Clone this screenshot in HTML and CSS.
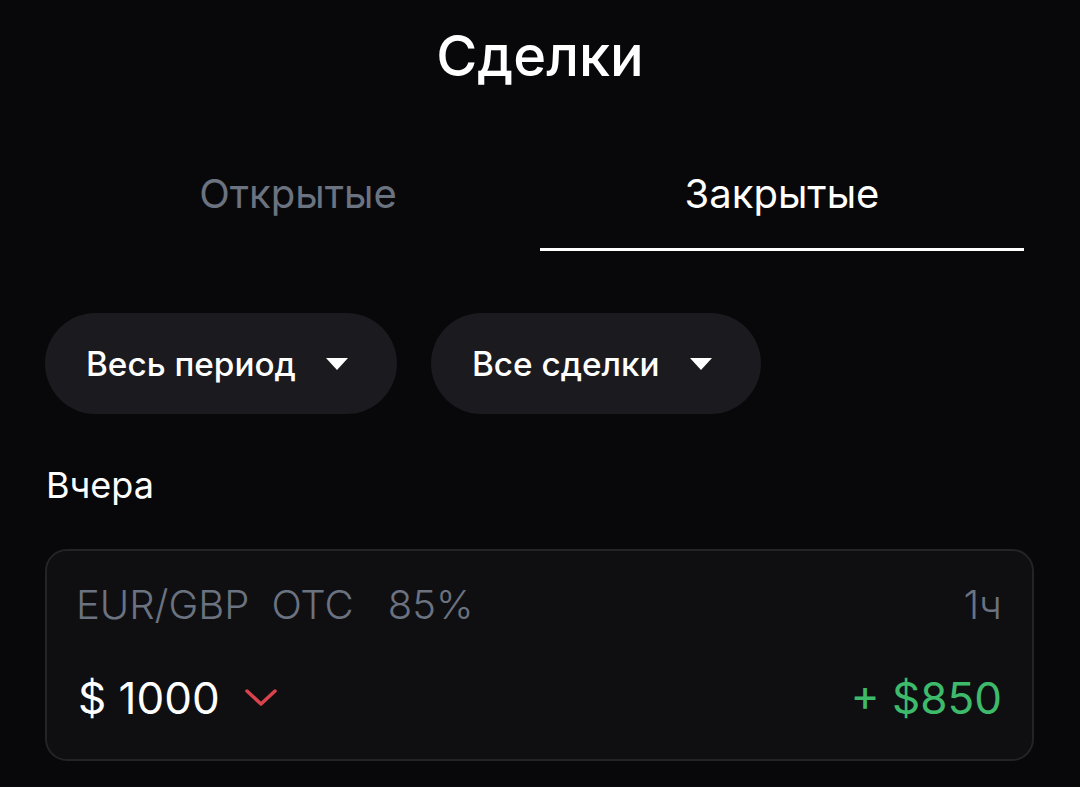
FILE: index.html
```html
<!DOCTYPE html>
<html lang="ru">
<head>
<meta charset="utf-8">
<link rel="stylesheet" href="styles.css">
</head>
<body>
<div class="page">
  <h1 class="title">Сделки</h1>
  <div class="tabs">
    <div class="tab">Открытые</div>
    <div class="tab active">Закрытые</div>
  </div>
  <div class="filters">
    <div class="pill">Весь период <span class="caret"></span></div>
    <div class="pill">Все сделки <span class="caret"></span></div>
  </div>
  <div class="day">Вчера</div>
  <div class="card">
    <div class="row top">
      <div class="meta"><span>EUR/GBP</span><span>OTC</span><span>85%</span></div>
      <div class="dur">1ч</div>
    </div>
    <div class="row bottom">
      <div class="amount">$ 1000
        <svg class="chev" width="34" height="20" viewBox="0 0 34 20"><path d="M3 3 L17 16 L31 3" fill="none" stroke="#d9434b" stroke-width="3.5" stroke-linecap="round" stroke-linejoin="round"/></svg>
      </div>
      <div class="profit">+ $850</div>
    </div>
  </div>
</div>
</body>
</html>
```
FILE: styles.css
```css
html, body {
  margin: 0;
  padding: 0;
  background: #08080a;
}
body {
  font-family: Inter, "Noto Sans", sans-serif;
  color: #ffffff;
}
.page {
  width: 1080px;
  height: 787px;
  overflow: hidden;
  padding: 21px 0 0;
  box-sizing: border-box;
}
.title {
  margin: 0;
  text-align: center;
  font-size: 56px;
  font-weight: 500;
  line-height: 70px;
}
.tabs {
  display: flex;
  margin: 79px 56px 0;
}
.tab {
  flex: 1;
  text-align: center;
  font-size: 40px;
  line-height: 48px;
  color: #6b7280;
  padding-bottom: 30px;
  border-bottom: 3px solid transparent;
}
.tab.active {
  color: #ffffff;
  border-bottom-color: #ffffff;
}
.filters {
  display: flex;
  gap: 34px;
  margin: 62px 45px 0;
}
.pill {
  display: flex;
  align-items: center;
  height: 101px;
  padding: 0 49px 0 41px;
  border-radius: 51px;
  background: #1a1a1f;
  font-size: 33.3px;
  font-weight: 500;
}
.caret {
  display: inline-block;
  margin-left: 30px;
  width: 0;
  height: 0;
  border-left: 11px solid transparent;
  border-right: 11px solid transparent;
  border-top: 12px solid #ffffff;
}
.day {
  margin: 49px 46px 0;
  font-size: 36px;
  line-height: 44px;
}
.card {
  margin: 42px 46px 0 45px;
  height: 212px;
  box-sizing: border-box;
  border: 2px solid #232328;
  border-radius: 22px;
  background: #0f0f12;
  padding: 30px 30px 0 29px;
}
.row {
  display: flex;
  justify-content: space-between;
  align-items: center;
}
.top {
  font-size: 40px;
  line-height: 48px;
  color: #6b7280;
  font-weight: 300;
}
.meta {
  display: flex;
  gap: 22px;
}
.meta span:last-child {
  margin-left: 12px;
}
.bottom {
  margin-top: 42px;
  font-size: 44px;
  line-height: 54px;
}
.amount {
  display: flex;
  align-items: center;
  gap: 24px;
  padding-left: 2px;
  font-weight: 400;
}
.profit {
  color: #3dbb6b;
}
```
